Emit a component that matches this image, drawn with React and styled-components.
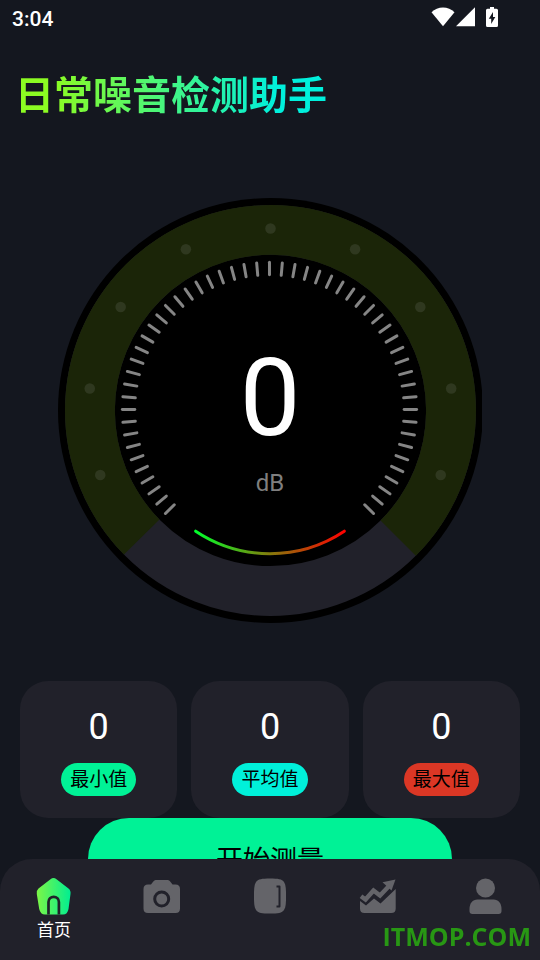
import React from "react";
import styled, { createGlobalStyle } from "styled-components";

const theme = {
  color: {
    page: "#14171f",
    panel: "#21212a",
    ring: "#1b2508",
    green: "#00f296",
    cyan: "#00f0da",
    red: "#db3725",
    muted: "#646469",
  },
  font: '"Roboto", "Noto Sans CJK SC", sans-serif',
};

const GlobalStyle = createGlobalStyle`
  *, *::before, *::after {
    box-sizing: border-box;
  }

  body {
    margin: 0;
    background: ${theme.color.page};
    color: white;
    font-family: ${theme.font};
  }

  button {
    font: inherit;
    border: 0;
    padding: 0;
    cursor: pointer;
  }
`;

const Page = styled.div`
  height: 100vh;
  overflow: hidden;
  display: flex;
  flex-direction: column;
`;

const StatusBar = styled.header`
  flex: none;
  display: flex;
  align-items: center;
  justify-content: space-between;
  height: 38px;
  padding: 0 42px 0 12px;
`;

const Clock = styled.time`
  font-size: 21px;
  font-weight: 500;
  line-height: 24px;
`;

const StatusIcons = styled.div`
  display: flex;
  align-items: center;
  margin-top: -4px;

  & svg {
    display: block;
  }
`;

const Title = styled.h1`
  flex: none;
  align-self: flex-start;
  margin: 26px 0 0 15px;
  font-family: "Noto Sans CJK SC", sans-serif;
  font-size: 39px;
  font-weight: 700;
  line-height: 56px;
  color: transparent;
  background: linear-gradient(90deg, #8cfb22 12%, #00f0dc 84%);
  background-clip: text;
`;

const Gauge = styled.section`
  flex: none;
  align-self: center;
  display: grid;
  width: 78.7%;
  margin-top: 78px;

  & > * {
    grid-area: 1 / 1;
  }
`;

const Dial = styled.svg`
  display: block;
  width: 100%;
`;

const Readout = styled.div`
  display: flex;
  flex-direction: column;
  align-items: center;
  align-self: center;
  padding-top: 12px;
`;

const Level = styled.span`
  font-size: 108px;
  line-height: 126px;
`;

const Unit = styled.span`
  margin-top: 8px;
  color: #7f7f7f;
  font-size: 24px;
  line-height: 28px;
`;

const Stats = styled.section`
  flex: none;
  display: grid;
  grid-template-columns: repeat(3, 1fr);
  gap: 14px;
  margin-top: 58px;
  padding: 0 20px;
`;

const StatCard = styled.div`
  display: flex;
  flex-direction: column;
  align-items: center;
  padding: 25px 0 22px;
  border-radius: 28px;
  background: ${theme.color.panel};
`;

const StatValue = styled.span`
  font-size: 36px;
  line-height: 42px;
`;

const StatLabel = styled.span`
  margin-top: 15px;
  padding: 1px 9px 0;
  border-radius: 17px;
  background: ${props => props.$color};
  color: black;
  font-size: 19px;
  line-height: 32px;
`;

const StartButton = styled.button`
  flex: none;
  align-self: center;
  width: calc(100% - 176px);
  height: 82px;
  border-radius: 41px;
  background: ${theme.color.green};
  color: black;

  && {
    font-size: 27px;
  }
`;

const TabBar = styled.nav`
  position: fixed;
  right: 0;
  bottom: 0;
  left: 0;
  display: grid;
  grid-template-columns: repeat(5, 1fr);
  min-height: 101px;
  padding-top: 19px;
  border-radius: 32px 32px 0 0;
  background: ${theme.color.panel};
`;

const Tab = styled.button`
  display: flex;
  flex-direction: column;
  align-items: center;
  gap: 2px;
  background: none;
  color: white;

  && {
    font-size: 17px;
    line-height: 28px;
  }

  & svg {
    display: block;
    width: 36px;
    height: 36px;
    overflow: visible;
  }
`;

const Watermark = styled.span`
  position: fixed;
  right: 9px;
  bottom: 7px;
  color: #289714;
  font-family: "Open Sans", sans-serif;
  font-size: 25px;
  font-weight: 700;
  line-height: 34px;
  pointer-events: none;
`;

const CENTER = 213;

const polar = (angle, radius) => {
  const rad = (angle * Math.PI) / 180;
  return [CENTER + radius * Math.sin(rad), CENTER - radius * Math.cos(rad)];
};

const ringPath = (from, to, inner, outer) => {
  const large = to - from > 180 ? 1 : 0;
  return [
    `M${polar(from, outer)}`,
    `A${outer} ${outer} 0 ${large} 1 ${polar(to, outer)}`,
    `L${polar(to, inner)}`,
    `A${inner} ${inner} 0 ${large} 0 ${polar(from, inner)}Z`,
  ].join("");
};

// one tick every 5 degrees, from -135 to 135
const ticks = Array.from({ length: 55 }, (_, i) => i * 5 - 135);
const dots = Array.from({ length: 9 }, (_, i) => ((i - 4) * 360) / 13);

const DialFace = () => (
  <Dial viewBox="0 0 426 426" aria-hidden="true">
    <defs>
      <linearGradient id="scale" gradientUnits="userSpaceOnUse" x1="138" y1="0" x2="288" y2="0">
        <stop offset="0" stopColor="#00ff2a" />
        <stop offset="0.5" stopColor="#857a0c" />
        <stop offset="1" stopColor="#ff0000" />
      </linearGradient>
    </defs>
    <circle cx={CENTER} cy={CENTER} r="213" fill="black" />
    <circle cx={CENTER} cy={CENTER} r="181" fill="none" stroke={theme.color.panel} strokeWidth="50" />
    <path d={ringPath(-134.5, 135, 156, 206)} fill={theme.color.ring} />
    {dots.map(angle => {
      const [x, y] = polar(angle, 182.5);
      return <circle key={angle} cx={x} cy={y} r="5.3" fill="#2f381f" />;
    })}
    <g stroke="#858585" strokeWidth="3" strokeLinecap="round" transform="translate(-1 -1)">
      {ticks.map(angle => {
        const [x1, y1] = polar(angle, 135);
        const [x2, y2] = polar(angle, 147.5);
        return <line key={angle} x1={x1} y1={y1} x2={x2} y2={y2} />;
      })}
    </g>
    <path
      d="M138 334A134.6 134.6 0 0 0 287 334"
      fill="none"
      stroke="url(#scale)"
      strokeWidth="3"
      strokeLinecap="round"
    />
  </Dial>
);

const HomeIcon = () => (
  <svg viewBox="0 0 36 36" aria-hidden="true">
    <defs>
      <linearGradient id="home" x1="0" y1="0" x2="1" y2="0">
        <stop offset="0" stopColor="#7cf646" />
        <stop offset="1" stopColor="#00ee92" />
      </linearGradient>
    </defs>
    <path
      d="M14.500 1.200Q17.500-1 20.500 1.200L32.500 10.500Q35 12.500 34.500 16L32.500 31Q31.500 36.500 27 36.500H9Q4.500 36.500 3.200 31L.8 16Q.2 12.500 2.500 10.500Z"
      fill="url(#home)"
    />
    <path
      d="M12.500 36.500V24a5.200 5.200 0 0 1 10.400 0V36.500"
      fill="none"
      stroke={theme.color.panel}
      strokeWidth="2.7"
    />
  </svg>
);

const CameraIcon = () => (
  <svg viewBox="0 0 36 36" aria-hidden="true" fill={theme.color.muted}>
    <path d="M11.500 2H24Q25.500 2 27 4.500L28.500 6.500H31.500Q36 6.500 36 11V30.500Q36 35 31.500 35H4Q-.5 35-.5 30.500V11Q-.5 6.500 4 6.500H7L8.500 4.500Q10 2 11.500 2Z" />
    <circle cx="17.700" cy="21" r="7" fill="none" stroke={theme.color.panel} strokeWidth="3" />
  </svg>
);

const NotebookIcon = () => (
  <svg viewBox="0 0 36 36" aria-hidden="true" fill={theme.color.muted}>
    <path d="M18 .5C26 .5 30 1 32 4C34 7 34 12 34 18S34 29 32 32C30 35 26 35.500 18 35.500S6 35 4 32C2 29 2 24 2 18S2 7 4 4C6 1 10 .5 18 .5Z" />
    <path d="M24.500 8.500H27.500V28.500H24.500" fill="none" stroke={theme.color.panel} strokeWidth="2" strokeLinejoin="round" />
  </svg>
);

const ChartIcon = () => (
  <svg viewBox="0 0 36 36" aria-hidden="true" fill={theme.color.muted}>
    <path d="M0 23L6 27.500L14 20.500L20.500 25.500L35.700 11V30.500Q35.700 35 31.200 35H4.500Q0 35 0 30.500Z" />
    <path d="M1 18.200L5.500 21.500L13.500 12.500L20 17.500L30 7" fill="none" stroke={theme.color.muted} strokeWidth="4.500" />
    <path d="M22.500 4.200L35.500 1.500L31.500 12.500Z" />
  </svg>
);

const UserIcon = () => (
  <svg viewBox="0 0 36 36" aria-hidden="true" fill={theme.color.muted}>
    <circle cx="17.500" cy="10" r="9.500" />
    <path d="M9.500 21.500H25.500C30.500 21.500 33.500 25.500 33.500 31V33Q33.500 36 30.500 36H4.500Q1.500 36 1.500 33V31C1.500 25.500 4.500 21.500 9.500 21.500Z" />
  </svg>
);

const stats = [
  { label: "最小值", value: 0, color: theme.color.green },
  { label: "平均值", value: 0, color: theme.color.cyan },
  { label: "最大值", value: 0, color: theme.color.red },
];

const tabs = [
  { id: "home", icon: HomeIcon, label: "首页" },
  { id: "camera", icon: CameraIcon },
  { id: "notebook", icon: NotebookIcon },
  { id: "chart", icon: ChartIcon },
  { id: "user", icon: UserIcon },
];

const App = () => (
  <>
    <GlobalStyle />
    <Page>
      <StatusBar>
        <Clock>3:04</Clock>
        <StatusIcons>
          <svg width="24" height="20" viewBox="0 0 24 20" fill="white" aria-hidden="true">
            <path d="M.5 5.200C6.500-1.200 17.500-1.200 23.500 5.200L12 19.300Z" />
          </svg>
          <svg width="31" height="20" viewBox="0 0 31 20" fill="white" aria-hidden="true">
            <path d="M20 .3V19.300H1Z" />
          </svg>
          <svg width="12" height="20" viewBox="0 0 12 20" fill="white" aria-hidden="true">
            <path d="M4 0H8V1.700H10.500Q12 1.700 12 3.200V18.500Q12 20 10.500 20H1.500Q0 20 0 18.500V3.200Q0 1.700 1.500 1.700H4Z" />
            <path d="M7 5L2.800 11.800H5.200V17L9.300 10H7Z" fill={theme.color.page} />
          </svg>
        </StatusIcons>
      </StatusBar>
      <Title>日常噪音检测助手</Title>
      <Gauge>
        <DialFace />
        <Readout>
          <Level>0</Level>
          <Unit>dB</Unit>
        </Readout>
      </Gauge>
      <Stats>
        {stats.map(({ label, value, color }) => (
          <StatCard key={label}>
            <StatValue>{value}</StatValue>
            <StatLabel $color={color}>{label}</StatLabel>
          </StatCard>
        ))}
      </Stats>
      <StartButton type="button">开始测量</StartButton>
    </Page>
    <TabBar>
      {tabs.map(({ id, icon: TabIcon, label }) => (
        <Tab key={id} type="button" aria-label={label || id}>
          <TabIcon />
          {label}
        </Tab>
      ))}
    </TabBar>
    <Watermark>ITMOP.COM</Watermark>
  </>
);

export default App;
